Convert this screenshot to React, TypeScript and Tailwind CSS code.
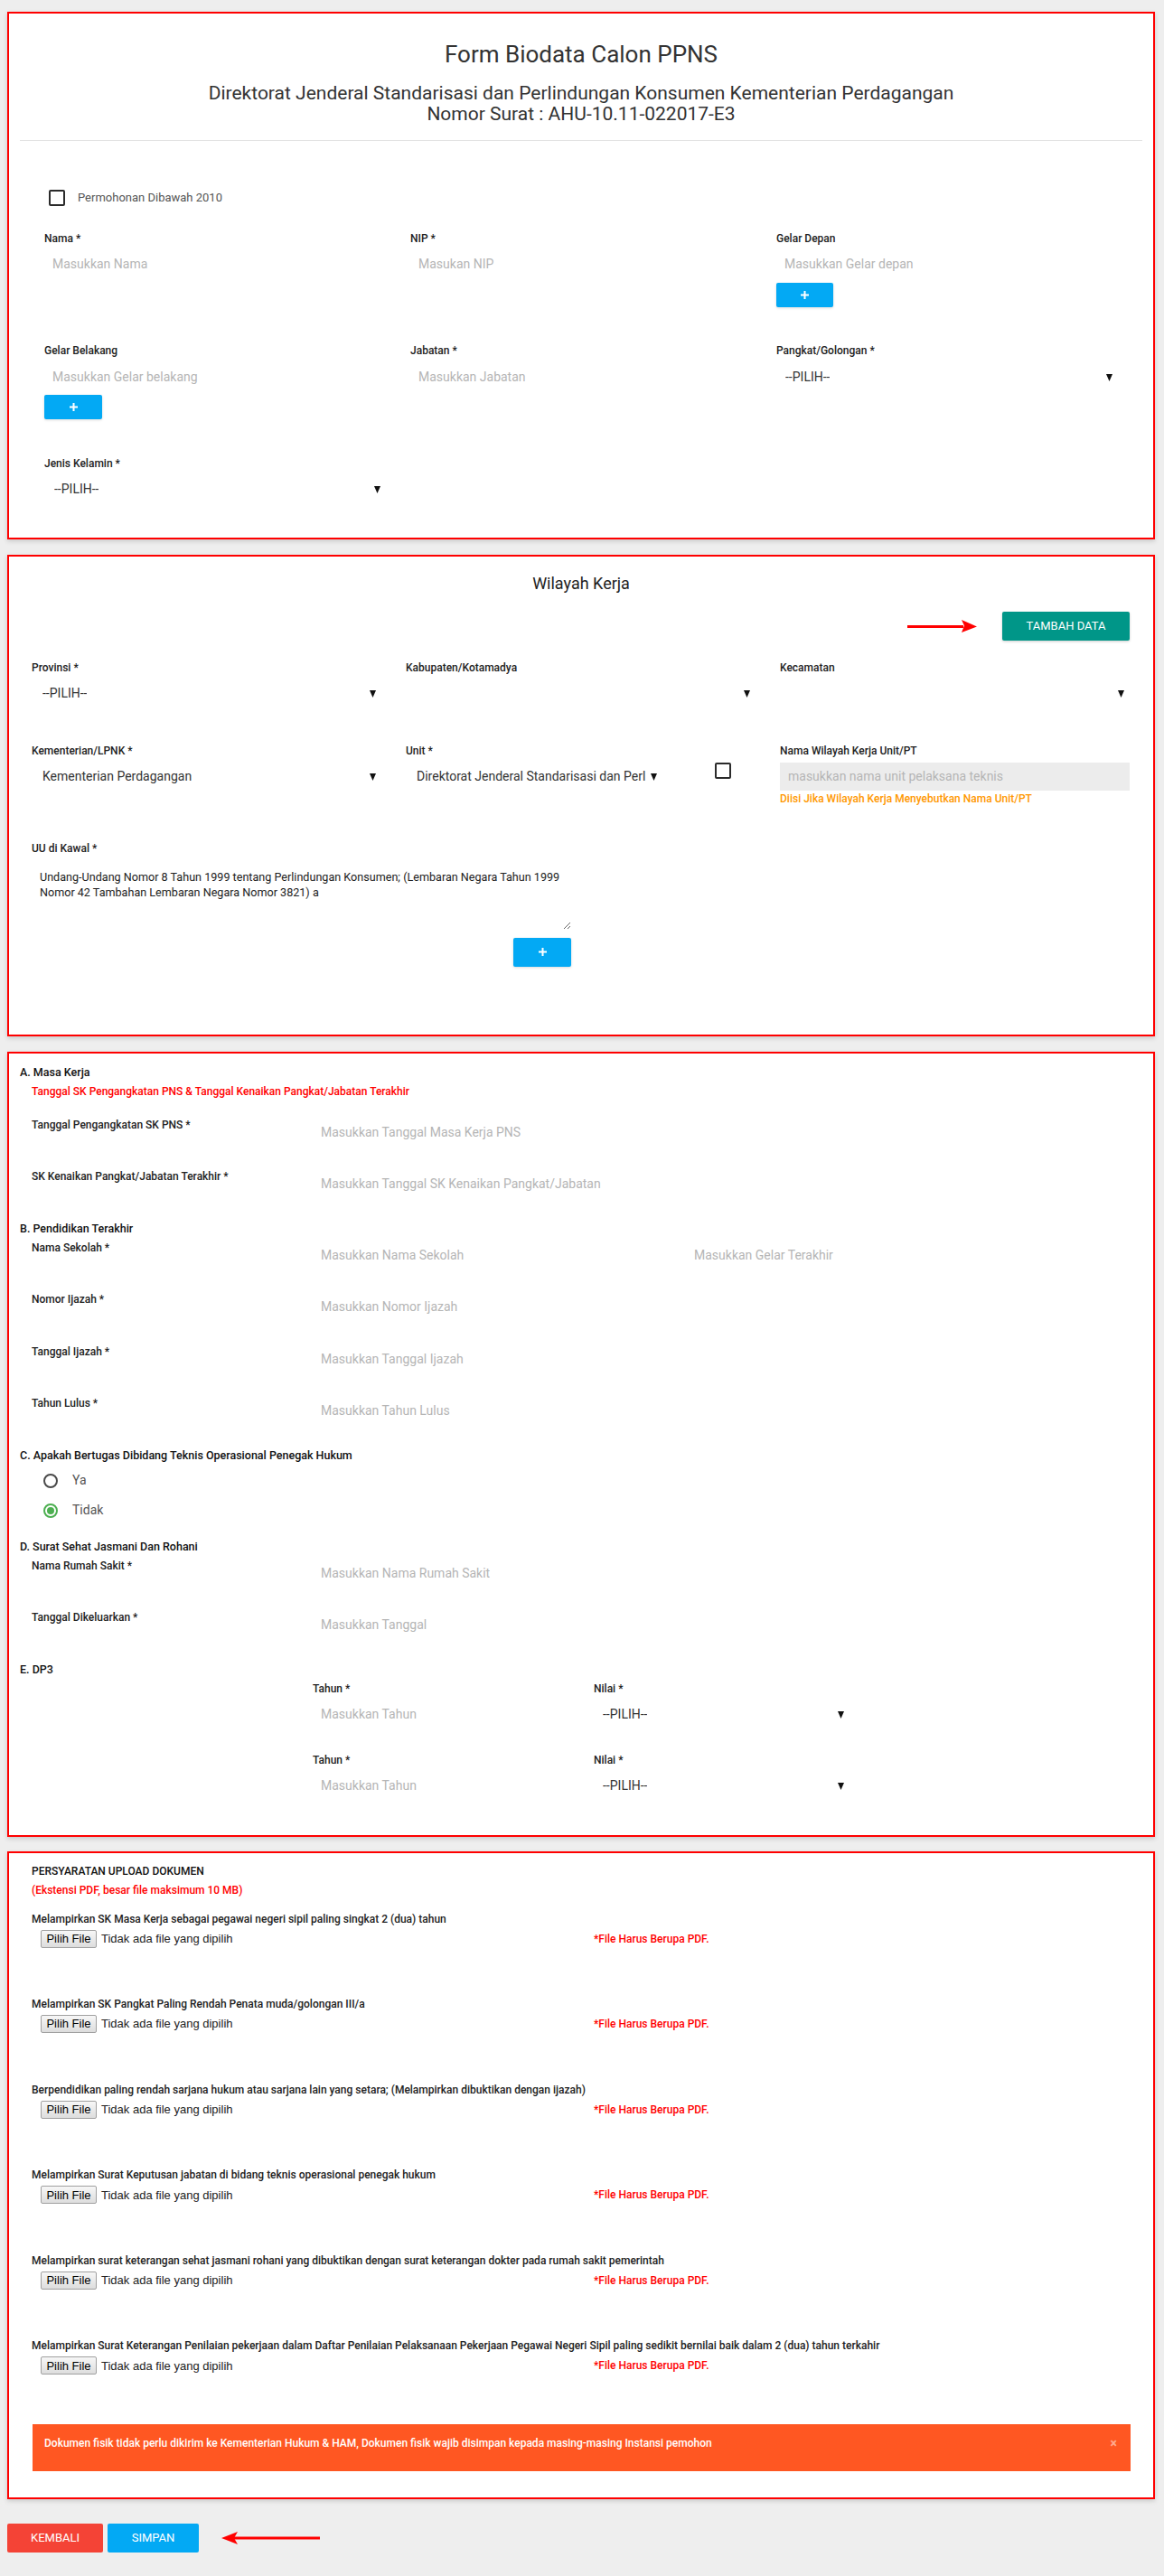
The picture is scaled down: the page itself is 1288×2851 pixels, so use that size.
import React from "react";

type Kids = { children?: React.ReactNode };

const Label = ({ children }: Kids) => (
  <div className="text-[12px] font-medium leading-[16px] text-[#222]">{children}</div>
);

const Placeholder = ({ children }: Kids) => (
  <div className="mt-[5px] flex h-[32px] items-center pl-[9px] text-[14px] text-[#b5b5b5]">
    {children}
  </div>
);

const Caret = () => (
  <svg width="7" height="9" viewBox="0 0 7 9" className="shrink-0">
    <path d="M0 1h7L3.5 9z" fill="#111" />
  </svg>
);

const Select = ({ value, className }: { value?: string; className: string }) => (
  <div
    className={`mt-[5px] flex h-[32px] items-center justify-between pr-[3px] text-[14px] text-[#333] ${className}`}
  >
    <span className="overflow-hidden whitespace-nowrap">{value}</span>
    <Caret />
  </div>
);

const PlusBtn = ({ className }: { className: string }) => (
  <button
    className={`flex items-center justify-center rounded-[2px] bg-[#03a9f4] shadow-[0_1px_3px_rgba(0,0,0,0.15)] ${className}`}
  >
    <svg width="9" height="9" viewBox="0 0 9 9">
      <path d="M3.5 0h2v3.5H9v2H5.5V9h-2V5.5H0v-2h3.5z" fill="#fff" />
    </svg>
  </button>
);

const Checkbox = ({ className }: { className: string }) => (
  <span className={`block h-[18px] w-[18px] shrink-0 rounded-[2px] border-2 border-[#2b2b2b] ${className}`} />
);

const RightArrow = () => (
  <svg width="77" height="16" viewBox="0 0 77 16">
    <path d="M0 7h62v3H0z" fill="#f00" />
    <path d="M60 1l17 7.5L60 15l3-7.5z" fill="#f00" />
  </svg>
);

const LeftArrow = () => (
  <svg width="109" height="16" viewBox="0 0 109 16">
    <path d="M14 6.5h95v3H14z" fill="#f00" />
    <path d="M18 1L0 8l18 7-4-7z" fill="#f00" />
  </svg>
);

const Card = ({ children, className = "" }: Kids & { className?: string }) => (
  <div
    className={`border-2 border-[#ff0000] bg-white shadow-[0_2px_5px_rgba(0,0,0,0.16)] ${className}`}
  >
    {children}
  </div>
);

const Heading = ({ children }: Kids) => (
  <div className="h-[21px] text-[12.5px] font-medium leading-[16px] text-[#111]">{children}</div>
);

const Row = ({ label, inputs }: { label: string; inputs: string[] }) => (
  <div className="grid h-[57.5px] grid-cols-[311px_413px_413px] pl-[13px]">
    <Label>{label}</Label>
    {inputs.map((p) => (
      <div key={p} className="mt-[8px] pl-[9px] text-[14px] leading-[16px] text-[#b5b5b5]">
        {p}
      </div>
    ))}
  </div>
);

const DP3Row = ({ className }: { className: string }) => (
  <div className={`grid grid-cols-[311px_311px] pl-[324px] ${className}`}>
    <div>
      <Label>Tahun *</Label>
      <Placeholder>Masukkan Tahun</Placeholder>
    </div>
    <div>
      <Label>Nilai *</Label>
      <Select value="--PILIH--" className="w-[280px] pl-[10px]" />
    </div>
  </div>
);

const uploads = [
  "Melampirkan SK Masa Kerja sebagai pegawai negeri sipil paling singkat 2 (dua) tahun",
  "Melampirkan SK Pangkat Paling Rendah Penata muda/golongan III/a",
  "Berpendidikan paling rendah sarjana hukum atau sarjana lain yang setara; (Melampirkan dibuktikan dengan ijazah)",
  "Melampirkan Surat Keputusan jabatan di bidang teknis operasional penegak hukum",
  "Melampirkan surat keterangan sehat jasmani rohani yang dibuktikan dengan surat keterangan dokter pada rumah sakit pemerintah",
  "Melampirkan Surat Keterangan Penilaian pekerjaan dalam Daftar Penilaian Pelaksanaan Pekerjaan Pegawai Negeri Sipil paling sedikit bernilai baik dalam 2 (dua) tahun terkahir",
];

const App: React.FC = () => {
  return (
    <div className="min-h-[2851px] bg-[#eeeeee] pb-[25px] pl-[8px] pr-[10px] pt-[13px] font-['Roboto','Noto_Sans',sans-serif] text-[#333]">
      {/* biodata */}
      <Card className="pb-[37px]">
        <div className="pt-[30px] text-center text-[#333]">
          <h1 className="text-[26px] leading-[30px]">Form Biodata Calon PPNS</h1>
          <h2 className="mt-[17px] text-[21px] leading-[23px]">
            Direktorat Jenderal Standarisasi dan Perlindungan Konsumen Kementerian Perdagangan
            <br />
            Nomor Surat : AHU-10.11-022017-E3
          </h2>
        </div>
        <div className="mx-[12px] mt-[17px] border-t border-[#e3e3e3]" />
        <div className="ml-[44px] mt-[53px] flex items-center">
          <Checkbox className="" />
          <span className="ml-[14px] text-[13px] text-[#555]">Permohonan Dibawah 2010</span>
        </div>
        <div className="mt-[27px] pl-[39px]">
          <div className="grid h-[124.5px] grid-cols-[405px_405px_405px]">
            <div>
              <Label>Nama *</Label>
              <Placeholder>Masukkan Nama</Placeholder>
            </div>
            <div>
              <Label>NIP *</Label>
              <Placeholder>Masukan NIP</Placeholder>
            </div>
            <div>
              <Label>Gelar Depan</Label>
              <Placeholder>Masukkan Gelar depan</Placeholder>
              <PlusBtn className="mt-[4px] h-[27px] w-[63px]" />
            </div>
          </div>
          <div className="grid h-[124.5px] grid-cols-[405px_405px_405px]">
            <div>
              <Label>Gelar Belakang</Label>
              <Placeholder>Masukkan Gelar belakang</Placeholder>
              <PlusBtn className="mt-[4px] h-[27px] w-[64px]" />
            </div>
            <div>
              <Label>Jabatan *</Label>
              <Placeholder>Masukkan Jabatan</Placeholder>
            </div>
            <div>
              <Label>Pangkat/Golongan *</Label>
              <Select value="--PILIH--" className="w-[375px] pl-[10px]" />
            </div>
          </div>
          <div className="grid grid-cols-[405px_405px_405px]">
            <div>
              <Label>Jenis Kelamin *</Label>
              <Select value="--PILIH--" className="w-[375px] pl-[11px]" />
            </div>
          </div>
        </div>
      </Card>

      {/* wilayah kerja */}
      <Card className="mt-[17px] pb-[75px]">
        <div className="pt-[18px] text-center text-[18px] leading-[24px] text-[#222]">Wilayah Kerja</div>
        <div className="mt-[19px] flex items-center justify-end pr-[26px]">
          <RightArrow />
          <button className="ml-[28px] h-[32px] w-[141px] rounded-[2px] bg-[#009688] text-[13px] text-white shadow-[0_1px_3px_rgba(0,0,0,0.2)]">
            TAMBAH DATA
          </button>
        </div>
        <div className="mt-[22px] pl-[25px]">
          <div className="grid h-[92px] grid-cols-[414px_414px_414px]">
            <div>
              <Label>Provinsi *</Label>
              <Select value="--PILIH--" className="w-[384px] pl-[12px]" />
            </div>
            <div>
              <Label>Kabupaten/Kotamadya</Label>
              <Select className="w-[384px] pl-[12px]" />
            </div>
            <div>
              <Label>Kecamatan</Label>
              <Select className="w-[384px] pl-[12px]" />
            </div>
          </div>
          <div className="grid h-[108px] grid-cols-[414px_414px_414px]">
            <div>
              <Label>Kementerian/LPNK *</Label>
              <Select value="Kementerian Perdagangan" className="w-[384px] pl-[12px]" />
            </div>
            <div>
              <Label>Unit *</Label>
              <div className="flex items-start">
                <Select
                  value="Direktorat Jenderal Standarisasi dan Perlind"
                  className="w-[281px] gap-[6px] pl-[12px] text-[13px]"
                />
                <Checkbox className="ml-[61px] mt-[5px]" />
              </div>
            </div>
            <div>
              <Label>Nama Wilayah Kerja Unit/PT</Label>
              <div className="mt-[5px] flex h-[31px] w-[387px] items-center bg-[#ececec] pl-[9px] text-[14px] text-[#b5b5b5]">
                masukkan nama unit pelaksana teknis
              </div>
              <div className="mt-[1px] text-[12px] font-medium leading-[16px] text-[#ff9800]">
                Diisi Jika Wilayah Kerja Menyebutkan Nama Unit/PT
              </div>
            </div>
          </div>
          <Label>UU di Kawal *</Label>
          <textarea
            readOnly
            wrap="off"
            className="mt-[5px] block h-[77px] w-[597px] resize-y overflow-hidden pl-[9px] pt-[10px] text-[12.6px] leading-[17px] text-[#222] outline-none"
            defaultValue={
              "Undang-Undang Nomor 8 Tahun 1999 tentang Perlindungan Konsumen; (Lembaran Negara Tahun 1999\nNomor 42 Tambahan Lembaran Negara Nomor 3821) a"
            }
          />
          <div className="flex w-[597px] justify-end">
            <PlusBtn className="mt-[9px] h-[32px] w-[64px]" />
          </div>
        </div>
      </Card>

      {/* data kepegawaian */}
      <Card className="mt-[17px] pb-[38px] pl-[12px] pt-[13px]">
        <Heading>A. Masa Kerja</Heading>
        <div className="h-[37px] pl-[13px] text-[12px] font-medium leading-[16px] text-[#ff0000]">
          Tanggal SK Pengangkatan PNS &amp; Tanggal Kenaikan Pangkat/Jabatan Terakhir
        </div>
        <Row label="Tanggal Pengangkatan SK PNS *" inputs={["Masukkan Tanggal Masa Kerja PNS"]} />
        <Row
          label="SK Kenaikan Pangkat/Jabatan Terakhir *"
          inputs={["Masukkan Tanggal SK Kenaikan Pangkat/Jabatan"]}
        />
        <Heading>B. Pendidikan Terakhir</Heading>
        <Row label="Nama Sekolah *" inputs={["Masukkan Nama Sekolah", "Masukkan Gelar Terakhir"]} />
        <Row label="Nomor Ijazah *" inputs={["Masukkan Nomor Ijazah"]} />
        <Row label="Tanggal Ijazah *" inputs={["Masukkan Tanggal Ijazah"]} />
        <Row label="Tahun Lulus *" inputs={["Masukkan Tahun Lulus"]} />
        <Heading>C. Apakah Bertugas Dibidang Teknis Operasional Penegak Hukum</Heading>
        <div className="pl-[26px] pt-[7px]">
          <div className="flex h-[16px] items-center">
            <span className="block h-[16px] w-[16px] rounded-full border-2 border-[#4a4a4a]" />
            <span className="ml-[16px] text-[14px] text-[#555]">Ya</span>
          </div>
          <div className="mt-[17px] flex h-[16px] items-center">
            <span className="flex h-[16px] w-[16px] items-center justify-center rounded-full border-2 border-[#4caf50]">
              <span className="block h-[8px] w-[8px] rounded-full bg-[#4caf50]" />
            </span>
            <span className="ml-[16px] text-[14px] text-[#555]">Tidak</span>
          </div>
        </div>
        <div className="mt-[24px]">
          <Heading>D. Surat Sehat Jasmani Dan Rohani</Heading>
        </div>
        <Row label="Nama Rumah Sakit *" inputs={["Masukkan Nama Rumah Sakit"]} />
        <Row label="Tanggal Dikeluarkan *" inputs={["Masukkan Tanggal"]} />
        <Heading>E. DP3</Heading>
        <DP3Row className="h-[79px]" />
        <DP3Row className="" />
      </Card>

      {/* upload dokumen */}
      <Card className="mt-[16px] pb-[29px] pt-[12px]">
        <div className="pl-[25px]">
          <div className="h-[21px] text-[12px] font-medium leading-[16px] text-[#111]">
            PERSYARATAN UPLOAD DOKUMEN
          </div>
          <div className="h-[32px] text-[12px] font-medium leading-[16px] text-[#ff0000]">
            (Ekstensi PDF, besar file maksimum 10 MB)
          </div>
          {uploads.map((u) => (
            <div key={u} className="h-[94.6px]">
              <Label>{u}</Label>
              <div className="mt-[4px] flex h-[20px] items-center">
                <div className="flex w-[622px] items-center pl-[10px] font-['Liberation_Sans',Arial,sans-serif] text-[13px]">
                  <span className="flex h-[20px] w-[62px] items-center justify-center rounded-[2px] border border-[#a0a0a0] bg-gradient-to-b from-[#f7f7f7] to-[#dddddd] text-black">
                    Pilih File
                  </span>
                  <span className="ml-[5px] text-[#222]">Tidak ada file yang dipilih</span>
                </div>
                <span className="text-[12px] font-medium text-[#ff0000]">*File Harus Berupa PDF.</span>
              </div>
            </div>
          ))}
        </div>
        <div className="ml-[26px] mr-[25px] flex h-[52px] items-start justify-between bg-[#ff5722] pl-[13px] pr-[15px] pt-[13px]">
          <span className="text-[12px] font-medium leading-[16px] text-white">
            Dokumen fisik tidak perlu dikirim ke Kementerian Hukum &amp; HAM, Dokumen fisik wajib disimpan kepada masing-masing Instansi pemohon
          </span>
          <span className="text-[14px] font-bold leading-[16px] text-white/50">×</span>
        </div>
      </Card>

      <div className="mt-[27px] flex items-center">
        <button className="h-[32px] w-[106px] rounded-[2px] bg-[#f44336] text-[13px] text-white">KEMBALI</button>
        <button className="ml-[5px] h-[32px] w-[101px] rounded-[2px] bg-[#03a9f4] text-[13px] text-white">
          SIMPAN
        </button>
        <div className="ml-[25px] flex items-center">
          <LeftArrow />
        </div>
      </div>
    </div>
  );
};

export default App;
